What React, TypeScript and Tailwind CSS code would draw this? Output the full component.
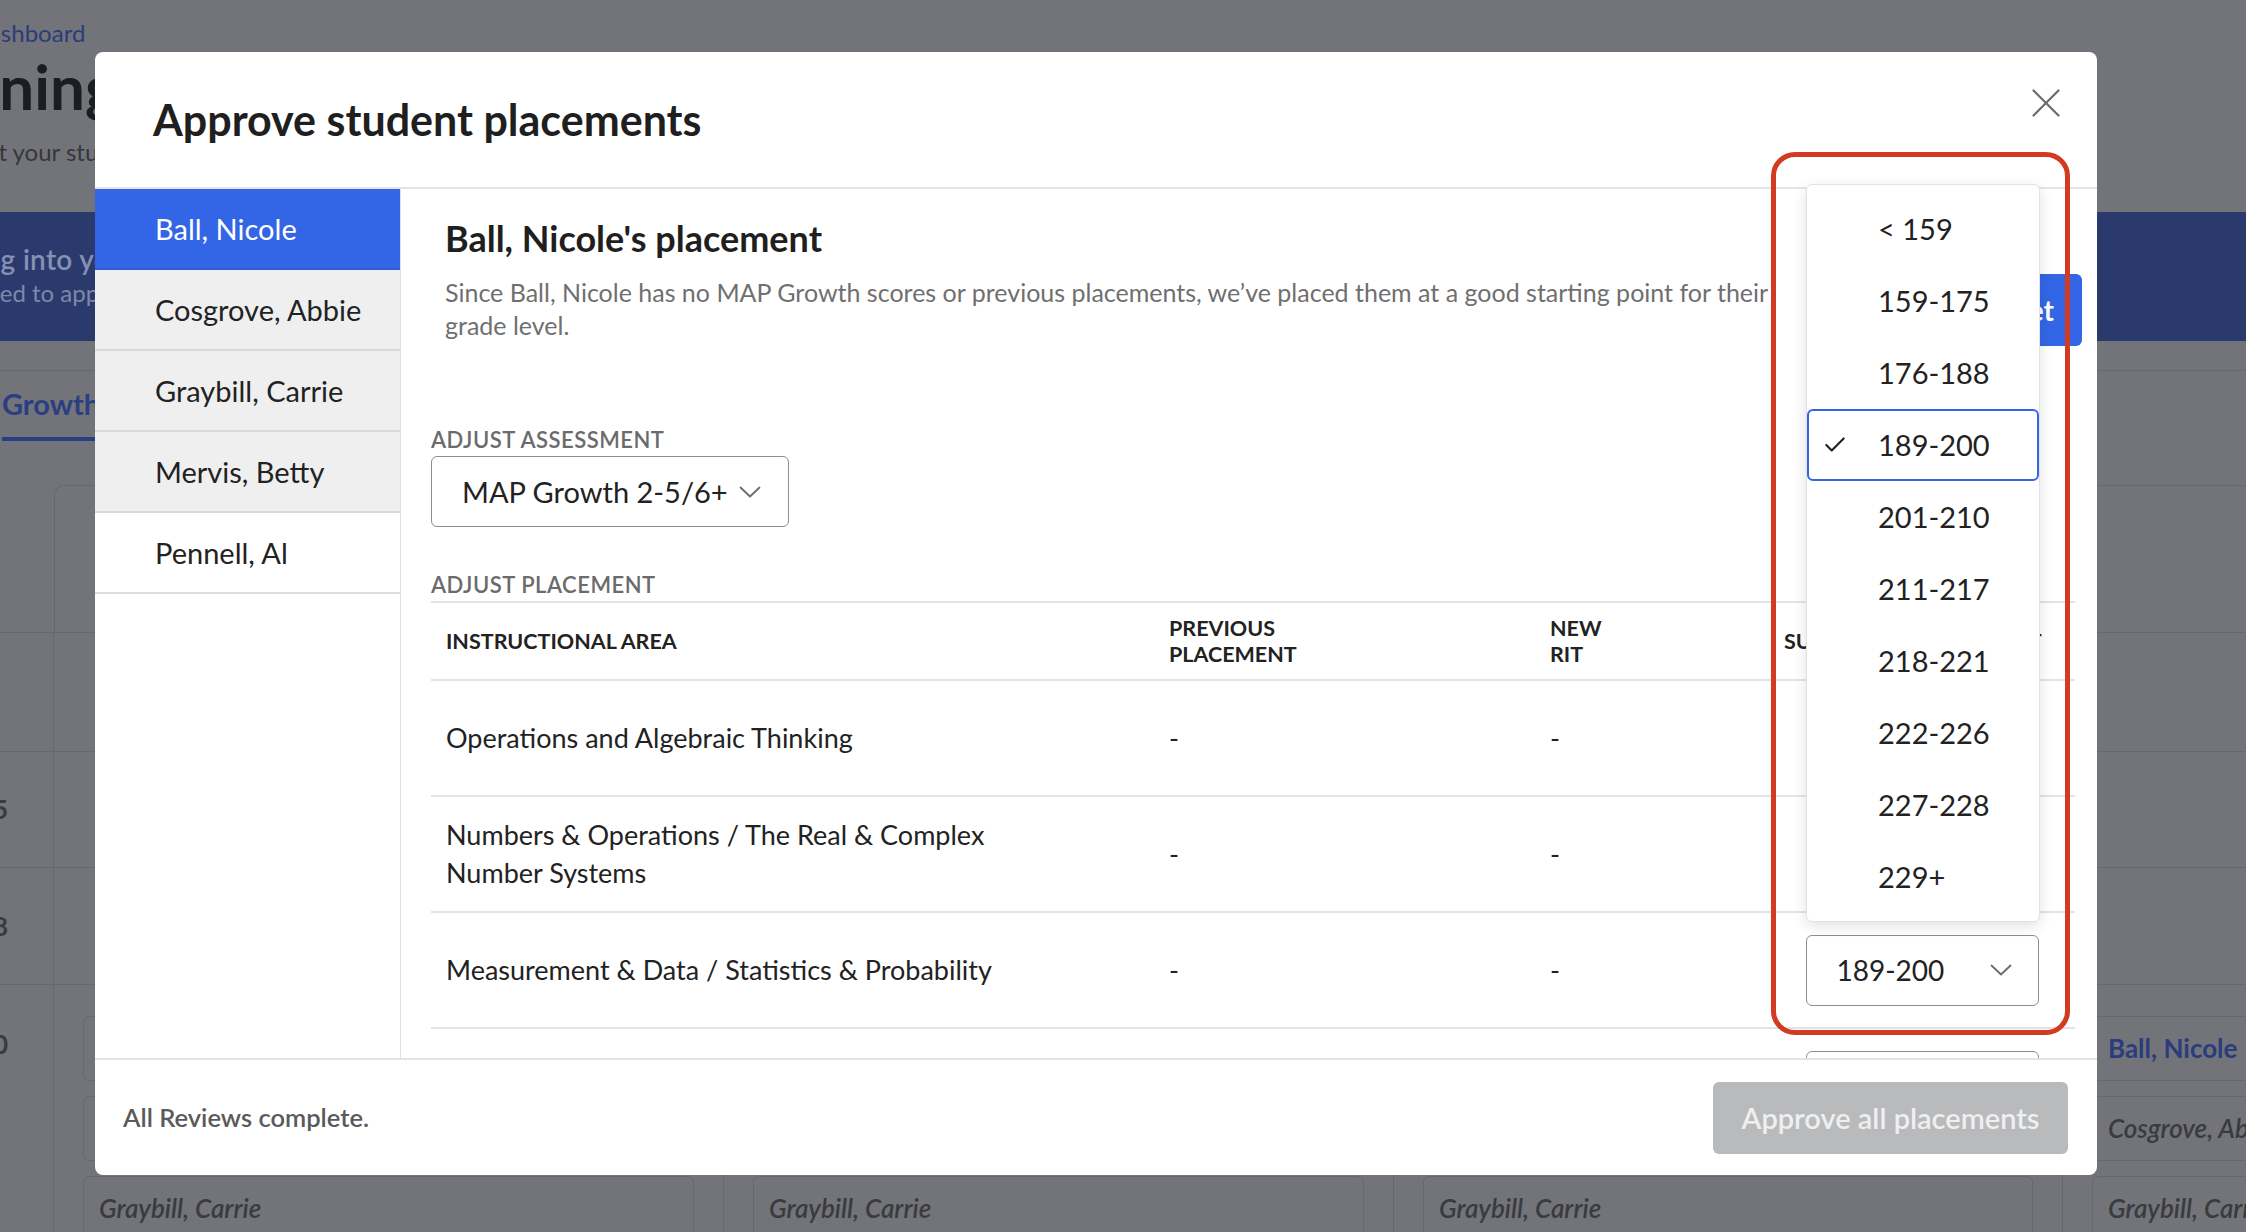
import { Check } from 'lucide-react'

const students = ['Ball, Nicole', 'Cosgrove, Abbie', 'Graybill, Carrie', 'Mervis, Betty', 'Pennell, Al']

const ritRanges = ['< 159', '159-175', '176-188', '189-200', '201-210', '211-217', '218-221', '222-226', '227-228', '229+']

const areas = [
  'Operations and Algebraic Thinking',
  'Numbers & Operations / The Real & Complex Number Systems',
  'Measurement & Data / Statistics & Probability',
  'Geometry'
]

const selectedRange = '189-200'

function Chevron() {
  return (
    <svg width="22" height="12" viewBox="0 0 22 12" fill="none" className="shrink-0">
      <polyline points="1.5,1.5 11,10.5 20.5,1.5" stroke="#6b6b6b" strokeWidth="1.8" strokeLinecap="round" strokeLinejoin="round" />
    </svg>
  )
}

function CloseIcon() {
  return (
    <svg width="28" height="28" viewBox="0 0 28 28" fill="none">
      <line x1="1.5" y1="1.5" x2="26.5" y2="26.5" stroke="#6b6b6b" strokeWidth="2.2" strokeLinecap="round" />
      <line x1="26.5" y1="1.5" x2="1.5" y2="26.5" stroke="#6b6b6b" strokeWidth="2.2" strokeLinecap="round" />
    </svg>
  )
}

function BgCards() {
  return (
    <div className="flex flex-col gap-[15px] px-[29px] pt-[31px]">
      <div className="flex h-[65px] items-center rounded-[6px] border border-[#67686d] px-[15px] text-[26px] font-bold text-[#2b3c7c]">
        Ball, Nicole
      </div>
      <div className="flex h-[65px] items-center rounded-[6px] border border-[#67686d] px-[15px] text-[26px] font-semibold italic text-[#3a3b3f]">
        Cosgrove, Abbie
      </div>
      <div className="flex h-[65px] items-center rounded-[6px] border border-[#67686d] px-[15px] text-[26px] font-semibold italic text-[#3a3b3f]">
        Graybill, Carrie
      </div>
    </div>
  )
}

function BackdropPage() {
  return (
    <div className="flex flex-col">
      <div className="h-[212px] pt-[18px]">
        <div className="-ml-[29px] text-[24px] leading-[30px] text-[#2b3c7c]">Dashboard</div>
        <div className="-ml-[119px] mt-[2px] text-[62px] font-bold leading-[72px] text-[#1c1d20]">Learning Pathways</div>
        <div className="-ml-[57px] mt-[15px] text-[24px] leading-[30px] text-[#36373b]">Select your students to get started</div>
      </div>
      <div className="flex h-[129px] flex-col justify-center bg-[#2a3a6d] pb-[4px]">
        <div className="-ml-[84px] text-[28px] font-semibold leading-[36px] tracking-[0.3px] text-[#8690b2]">Looking into your data</div>
        <div className="-ml-[88px] text-[24px] leading-[32px] text-[#7e88aa]">You'll need to approve placements first</div>
      </div>
      <div className="mt-[29px] h-[71px] border-t border-[#67686d]">
        <div className="ml-[2px] inline-flex h-[70px] items-center border-b-4 border-[#2b3e83] pr-4 text-[29px] font-bold text-[#2b3e83]">
          Growth
        </div>
      </div>
      <div className="mt-[44px] flex flex-col text-[26px] font-bold text-[#3a3b3f]">
        <div className="flex h-[148px] border-b border-[#67686d]">
          <div className="w-[54px] shrink-0" />
          <div className="flex-1 rounded-tl-[10px] border-l border-t border-[#67686d]" />
        </div>
        <div className="flex h-[119px] border-b border-[#67686d]">
          <div className="w-[54px] shrink-0 border-r border-[#67686d]" />
        </div>
        <div className="flex h-[116px] border-b border-[#67686d]">
          <div className="flex w-[54px] shrink-0 items-center justify-end border-r border-[#67686d] pr-[45px]">15</div>
        </div>
        <div className="flex h-[117px] border-b border-[#67686d]">
          <div className="flex w-[54px] shrink-0 items-center justify-end border-r border-[#67686d] pr-[45px]">18</div>
        </div>
        <div className="flex h-[260px]">
          <div className="flex h-full w-[54px] shrink-0 items-start justify-end border-r border-[#67686d] pr-[45px] pt-[40px]">20</div>
          <div className="w-[670px] shrink-0 border-r border-[#67686d]"><BgCards /></div>
          <div className="w-[670px] shrink-0 border-r border-[#67686d]"><BgCards /></div>
          <div className="w-[669px] shrink-0 border-r border-[#67686d]"><BgCards /></div>
          <div className="w-[670px] shrink-0"><BgCards /></div>
        </div>
      </div>
    </div>
  )
}

function RitSelect({ value }: { value: string }) {
  return (
    <div className="mx-auto flex h-[71px] w-[233px] items-center justify-between rounded-[6px] border border-[#8e8e8e] bg-white pl-[30px] pr-[26px] text-[28px] text-[#222]">
      <span>{value}</span>
      <Chevron />
    </div>
  )
}

function RitMenu() {
  return (
    <div className="absolute left-[1711px] top-[132px] w-[234px] rounded-[6px] border border-[#e2e2e2] bg-white py-[8px] shadow-[0_4px_14px_rgba(0,0,0,0.12)]">
      {ritRanges.map((r) =>
        r === selectedRange ? (
          <div key={r} className="relative flex h-[72px] items-center rounded-[6px] border-[2.5px] border-[#3366e6] pl-[69px] text-[29px] text-[#222]">
            <Check size={26} strokeWidth={2} className="absolute left-[13px] text-[#222]" />
            {r}
          </div>
        ) : (
          <div key={r} className="flex h-[72px] items-center pl-[71px] text-[29px] text-[#222]">
            {r}
          </div>
        )
      )}
    </div>
  )
}

export default function App() {
  return (
    <div className="relative h-[1232px] w-[2246px] overflow-hidden bg-[#737479] [font-family:Lato,'Liberation_Sans',sans-serif]">
      <BackdropPage />

      <div className="absolute inset-0 pl-[95px] pt-[52px]">
        <div className="relative flex h-[1123px] w-[2002px] flex-col overflow-hidden rounded-[8px] bg-white">
          <div className="flex h-[137px] shrink-0 items-center border-b-2 border-[#e4e4e4] pl-[58px]">
            <h1 className="text-[43px] font-bold leading-[50px] text-[#1f1f1f]">Approve student placements</h1>
          </div>
          <button type="button" className="absolute right-[37px] top-[37px]">
            <CloseIcon />
          </button>

          <div className="flex h-[869px] shrink-0">
            <div className="w-[306px] shrink-0 border-r border-[#e0e0e0]">
              {students.map((s, i) =>
                i === 0 ? (
                  <div key={s} className="flex h-[81px] items-center border-b-2 border-[#2f5ed6] bg-[#3366e6] pl-[60px] text-[29px] text-white">
                    {s}
                  </div>
                ) : i === students.length - 1 ? (
                  <div key={s} className="flex h-[81px] items-center border-b-2 border-[#dcdcdc] bg-white pl-[60px] text-[29px] text-[#222]">
                    {s}
                  </div>
                ) : (
                  <div key={s} className="flex h-[81px] items-center border-b-2 border-[#d9d9d9] bg-[#efefef] pl-[60px] text-[29px] text-[#222]">
                    {s}
                  </div>
                )
              )}
            </div>

            <div className="min-w-0 flex-1 overflow-hidden pl-[30px] pr-[22px]">
              <div className="flex items-end pl-[14px] pt-[28px]">
                <div className="min-w-0 flex-1">
                  <h2 className="text-[36px] font-bold leading-[43px] text-[#1f1f1f]">Ball, Nicole's placement</h2>
                  <p className="mt-[16px] max-w-[1370px] text-[25px] leading-[33px] text-[#6f6f6f]">
                    Since Ball, Nicole has no MAP Growth scores or previous placements, we’ve placed them at a good starting point for their grade level.
                  </p>
                </div>
                <button type="button" className="-mr-[7px] mb-[-4px] h-[72px] rounded-[6px] bg-[#3366e6] px-[28px] text-[28px] font-bold text-white">
                  Reset
                </button>
              </div>

              <div className="mt-[85px] text-[22px] font-semibold uppercase leading-[25px] tracking-[0.5px] text-[#6b6b6b]">Adjust assessment</div>
              <div className="mt-[4px] flex h-[71px] w-[358px] items-center justify-between rounded-[6px] border border-[#8e8e8e] pl-[30px] pr-[27px] text-[29px] text-[#222]">
                <span>MAP Growth 2-5/6+</span>
                <Chevron />
              </div>

              <div className="mt-[45px] text-[22px] font-semibold uppercase leading-[25px] tracking-[0.5px] text-[#6b6b6b]">Adjust placement</div>
              <div className="mt-[4px] border-t-2 border-[#e3e3e3]">
                <div className="grid h-[78px] grid-cols-[723px_381px_234px_1fr] items-center border-b-2 border-[#e3e3e3] text-[21.5px] font-bold uppercase leading-[26px] text-[#222]">
                  <div className="pl-[15px]">Instructional area</div>
                  <div className="pl-[15px]">Previous<br />placement</div>
                  <div className="pl-[15px]">New<br />RIT</div>
                  <div className="whitespace-nowrap pl-[15px]">Suggested placement</div>
                </div>
                {areas.map((a) => (
                  <div key={a} className="grid h-[116px] grid-cols-[723px_381px_234px_1fr] items-center border-b-2 border-[#e3e3e3] text-[27px] leading-[38px] text-[#222]">
                    <div className="max-w-[610px] pl-[15px]">{a}</div>
                    <div className="pl-[15px]">-</div>
                    <div className="pl-[15px]">-</div>
                    <div>
                      <RitSelect value={selectedRange} />
                    </div>
                  </div>
                ))}
              </div>
            </div>
          </div>

          <div className="flex h-[117px] shrink-0 items-center justify-between border-t-2 border-[#e3e3e3] pl-[28px] pr-[29px]">
            <span className="text-[25.5px] font-semibold text-[#5a5a5a]">All Reviews complete.</span>
            <button type="button" disabled className="h-[72px] w-[355px] rounded-[6px] bg-[#b9babc] text-[29px] font-semibold text-[#efefef]">
              Approve all placements
            </button>
          </div>

          <RitMenu />
          <div className="pointer-events-none absolute left-[1676px] top-[100px] h-[883px] w-[299px] rounded-[24px] border-[5px] border-[#d13b22]" />
        </div>
      </div>
    </div>
  )
}
